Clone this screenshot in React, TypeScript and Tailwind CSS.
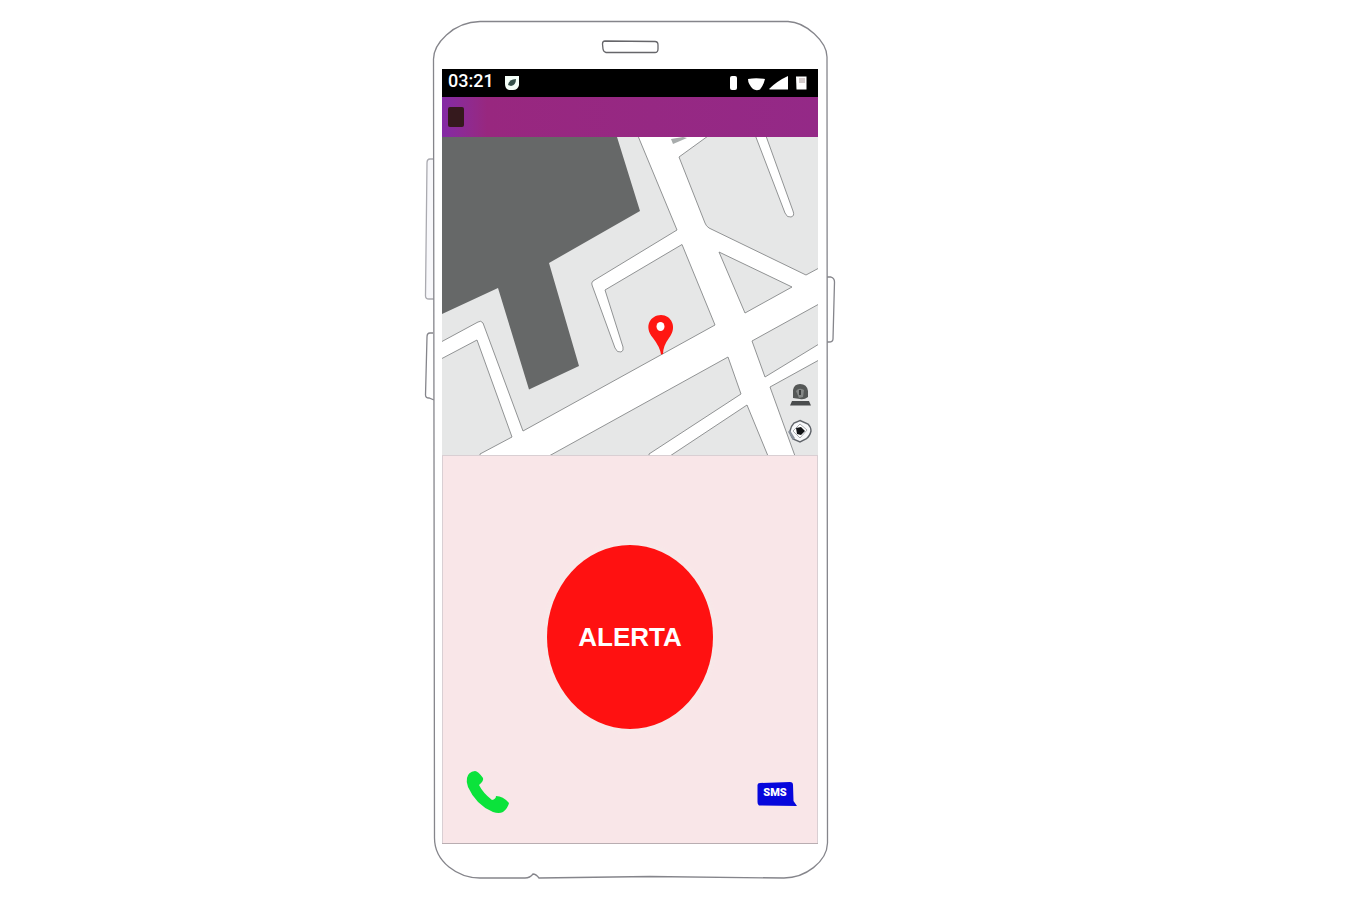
function PhoneFrame() {
  return (
    <svg
      aria-hidden="true"
      className="absolute inset-0 h-full w-full"
      viewBox="424 20 412 860"
      fill="none"
      stroke="#85858b"
      strokeWidth="1.3"
    >
      <path d="M433 159 H430 Q427 159 427 163 L425.500 296 Q425.500 299 429 299 H434" fill="#f8f8fb" stroke="#aaaab0" />
      <path d="M433 333 H430 Q427 333 427 337 L425.500 395 Q425.500 398 429 398 L434 400" />
      <path d="M827 277 H831 Q834.500 278 834.500 282 L833 339 Q833 342 829 342 H827" />
      <path
        d="M480 21.500 H788 C806 22 827 42 827 57 L827.500 843 C827 862 805 878 784 878 L650 876.500 L539 878 Q536 874 533 874 Q530 878 525 878 H480 C458 878 434.500 862 434.500 838 L433.500 60 C433 44 453 22 480 21.500 Z"
        fill="#ffffff"
      />
      <path d="M605 41 L655 41.500 Q658 41.500 658 45 V49 Q658 52.500 655 52.500 H606 Q603.500 52 603 49 L602.500 44 Q602.500 41 605 41 Z" stroke="#66666a" />
    </svg>
  );
}

function StatusBar() {
  return (
    <div className="flex h-7 items-center bg-black pr-2.5 pl-1.5 text-white">
      <time className="pb-1 text-lg leading-6 font-medium">03:21</time>
      <svg aria-hidden="true" className="ml-2.5 h-4 w-4" viewBox="0 0 16 16">
        <path d="M1 1 H15 V10 Q14 15 9 15 H5 Q1 14 1 9 Z" fill="#f5fff9" />
        <path d="M4 10 Q5 4 12 4 Q12 10 7 11 Z" fill="#35504a" />
      </svg>
      <svg aria-hidden="true" className="ml-auto h-4 w-20" viewBox="728 74 80 16" fill="#ffffff">
        <rect x="730" y="75" width="7" height="14" rx="2" />
        <path d="M748 78 Q756 76.500 765 78 Q764 83 760 88.500 Q756 90 753 88 Q748 83 748 78 Z" />
        <path d="M769 88 Q777 80 788 75 V88.500 H770 Z" />
        <path d="M796 75.500 H806.500 V88.500 H796.500 Z" />
        <rect x="799" y="77" width="6" height="5" fill="#d4cccc" />
      </svg>
    </div>
  );
}

function StreetMap() {
  return (
    <svg
      role="img"
      aria-label="Mapa"
      className="block w-full"
      viewBox="442 137 376 318"
      fill="#e6e7e7"
      stroke="#868889"
      strokeWidth="0.9"
    >
      <rect x="442" y="137" width="376" height="318" fill="#ffffff" stroke="none" />
      <path d="M441 136 H638 L677 230 L593 281 Q591 283 592 285 L615 348 Q617 353 621 352 Q624 351 623 347 L605 290 L682 244.500 L715 325 L523 431 L483 323 Q481 320 478 322 L441 342 Z" />
      <path d="M441 359 L477 340 L512 437 L480 454 L480 456 H441 Z" />
      <path d="M549 456 L728 357 L741 394 L649 454 V456 Z" />
      <path d="M670 456 L747 405 L768 456 Z" />
      <path d="M770 387 L819 360 V456 H795 Z" />
      <path d="M752 341 L819 304 V344 L765 377 Z" />
      <path d="M719 252 L792 287 L745 313 Z" />
      <path d="M679 157 L708 136 H755.500 L785 213 Q787 218 791 217 Q795 216 793 211 L766 136 H819 V268 L806 275 L709 228 Q706 226 705 223 Z" />
      <path d="M671 139 L683 137 L687 138 L673 144 Z" fill="#a8acac" stroke="none" />
      <path d="M442 137 H617 L640 211 L549 263 L579 366 L529 389.500 L498 288 L442 314 Z" fill="#666868" stroke="none" />
      <path d="M661 354.500 Q660 347 653 338 C643 326 651 315 661 315 C671 315 678 327 669 338 Q663 346 663 354 Z" fill="#ff1712" stroke="none" />
      <ellipse cx="660.500" cy="326.500" rx="4" ry="4.500" fill="#ffffff" stroke="none" />
    </svg>
  );
}

function MapControls() {
  return (
    <div className="absolute right-1.5 bottom-3 flex flex-col items-center gap-3">
      <button type="button" aria-label="Perfil" className="block">
        <svg className="h-6 w-6" viewBox="0 0 24 24">
          <path d="M5 15 V7 Q6 1 12 1 Q19 1 20 8 V14 Q16 17 12 16 Z" fill="#555857" />
          <path d="M8 8 Q11 4 16 7 L15 14 L11 15 Z" fill="#858887" />
          <path d="M12 7 V12" stroke="#3d4040" strokeWidth="2" />
          <path d="M4 18 H21 L23 22.500 H2 Z" fill="#4b4d4e" />
        </svg>
      </button>
      <button type="button" aria-label="Mi ubicación" className="block">
        <svg className="h-6 w-6" viewBox="0 0 24 24">
          <path d="M12 1.500 L20 5 Q23 8 23 12 Q22 17 18 20 L12 23 L5 20 Q2 16 2 12 Q3 7 6 4 Z" fill="#f7f8fa" stroke="#60646a" strokeWidth="1.4" />
          <path d="M1 12 L6 20" stroke="#8a919c" strokeWidth="2.500" />
          <path d="M12 5 L19 11 L12 19 L5 12 Z" fill="#ffffff" stroke="#aaadb1" />
          <path d="M8 9 L13 8 L17 12 L13 16 L9 15 Z" fill="#111316" />
        </svg>
      </button>
    </div>
  );
}

export default function App() {
  return (
    <main className="flex min-h-screen items-start justify-center bg-white pt-5 pr-[108px] font-['Roboto',sans-serif]">
      <div className="relative w-full max-w-[412px] px-[18px] pt-[49px] pb-9">
        <PhoneFrame />
        <div className="relative border-b border-[#b9adb1]">
          <StatusBar />
          <header className="flex h-10 items-center bg-linear-to-r from-[#842aa5] via-[#98277f] via-12% to-[#942987] px-1.5">
            <button type="button" aria-label="Menú" className="h-5 w-4 rounded-xs bg-[#35191d]" />
          </header>
          <section className="relative">
            <StreetMap />
            <MapControls />
          </section>
          <section className="border-x border-t border-[#d9cfd3] bg-[#f9e6e8] px-3.5 pt-[89px] pb-[26px]">
            <button
              type="button"
              className="mx-auto flex h-[184px] w-[166px] items-center justify-center rounded-[50%] bg-[#ff1111] font-['Liberation_Sans',sans-serif] text-[26px] leading-8 font-bold text-white shadow-[0_0_6px_#f5eeeb]"
            >
              ALERTA
            </button>
            <div className="mt-10 flex items-center justify-between pr-1.5 pl-2">
              <button type="button" aria-label="Llamar" className="block">
                <svg className="block h-12 w-12" viewBox="465 769 48 48">
                  <path
                    d="M467 778 Q468 772 475 771 Q478 771 483 778 Q484 781 479 785 Q483 793 492 800 Q496 799 496 796 Q503 796 509 803 Q508 808 503 812 Q499 814 493 812 Q476 805 468 787 Q466 782 467 778 Z"
                    fill="#0be33b"
                  />
                </svg>
              </button>
              <button type="button" className="relative flex h-8 w-10 justify-center pt-2 text-[11px] leading-4 font-black text-white">
                <svg aria-hidden="true" className="absolute inset-0 h-full w-full" viewBox="757 777 40 32">
                  <path d="M760 783 L790 782 Q793 782 793 785 L793.500 801 L797 806 L759 805.500 Q757.500 805 757.500 802 V785 Q757.500 783 760 783 Z" fill="#0707dc" />
                </svg>
                <span className="relative pr-1">SMS</span>
              </button>
            </div>
          </section>
        </div>
      </div>
    </main>
  );
}
